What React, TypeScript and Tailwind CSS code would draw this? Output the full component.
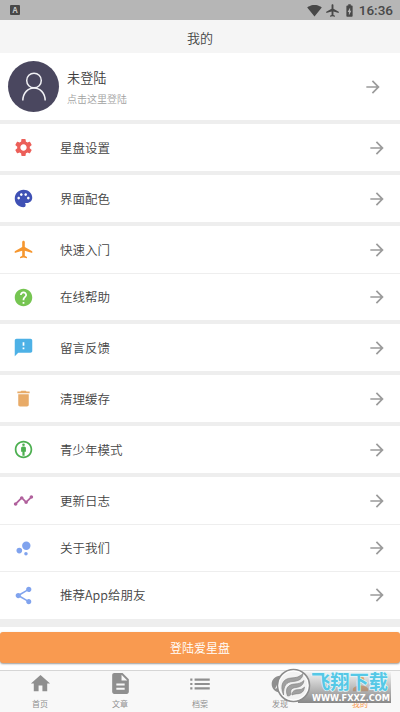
import React from 'react';
import type { IconType } from 'react-icons';
import {
    MdSettings,
    MdPalette,
    MdLocalAirport,
    MdHelp,
    MdFeedback,
    MdDelete,
    MdAttribution,
    MdTimeline,
    MdBubbleChart,
    MdShare,
    MdArrowForward,
    MdHome,
    MdDescription,
    MdList,
    MdExplore,
    MdPerson,
    MdSignalWifi4Bar,
    MdBatteryChargingFull,
} from 'react-icons/md';

interface MenuItem {
    label: string;
    icon: IconType;
    color: string;
}

const groups: MenuItem[][] = [
    [{ label: '星盘设置', icon: MdSettings, color: 'text-[#ec5f59]' }],
    [{ label: '界面配色', icon: MdPalette, color: 'text-[#3f51b5]' }],
    [
        { label: '快速入门', icon: MdLocalAirport, color: 'text-[#f6972f]' },
        { label: '在线帮助', icon: MdHelp, color: 'text-[#76c552]' },
    ],
    [{ label: '留言反馈', icon: MdFeedback, color: 'text-[#4db1e6]' }],
    [{ label: '清理缓存', icon: MdDelete, color: 'text-[#e8ab68]' }],
    [{ label: '青少年模式', icon: MdAttribution, color: 'text-[#4caf50]' }],
    [
        { label: '更新日志', icon: MdTimeline, color: 'text-[#b0609c]' },
        { label: '关于我们', icon: MdBubbleChart, color: 'text-[#80a3ee]' },
        { label: '推荐App给朋友', icon: MdShare, color: 'text-[#80a3ee]' },
    ],
];

const tabs = [
    { label: '首页', icon: MdHome, size: 'w-[23px]', active: false },
    { label: '文章', icon: MdDescription, size: 'w-[25px]', active: false },
    { label: '档案', icon: MdList, size: 'w-[26px]', active: false },
    { label: '发现', icon: MdExplore, size: 'w-[20px]', active: false },
    { label: '我的', icon: MdPerson, size: 'w-[23px]', active: true },
];

const StatusBar = () => (
    <div className="h-5 shrink-0 flex items-center justify-between bg-[#b6b6b6] pl-[10px] pr-[7px] text-[#484848]">
        <div className="w-[10px] h-[10px] rounded-[1px] bg-[#484848] text-[#c8c8c8] text-[8px] leading-[10px] font-bold text-center">A</div>
        <div className="flex items-center">
            <MdSignalWifi4Bar className="w-[15px] h-[15px]" />
            <MdLocalAirport className="w-[15px] h-[15px] ml-[3px]" />
            <MdBatteryChargingFull className="w-[15px] h-[15px] ml-[2px]" />
            <span className="font-[Roboto] text-[13.5px] leading-5 font-medium ml-[2px]">16:36</span>
        </div>
    </div>
);

const MenuRow = ({ item, divided }: { item: MenuItem; divided: boolean }) => {
    const Icon = item.icon;
    return (
        <div className={`h-[47px] flex items-center pl-[13px] pr-[13px] bg-white ${divided ? 'border-t border-[#eee]' : ''}`}>
            <Icon className={`w-[21px] h-[21px] ${item.color}`} />
            <span className="ml-[26px] flex-1 text-[12.5px] leading-5 font-[350] text-[#444]">{item.label}</span>
            <MdArrowForward className="w-5 h-5 text-[#9b9b9b]" />
        </div>
    );
};

const Watermark = () => (
    <div className="absolute left-[276px] top-[668px] w-[118px] h-[36px]">
        <div className="absolute left-[22px] top-[4px] w-[93px] h-[31px] bg-linear-to-b from-[#e4e4e4]/30 to-[#7c7c7c]/90" />
        <svg className="absolute left-0 top-0 w-[118px] h-[36px]" viewBox="0 0 118 36">
            <circle cx="17.5" cy="17.500" r="16" fill="#f2f2f2" stroke="#8c8c8c" strokeWidth="1.600" />
            <circle cx="17.5" cy="17.500" r="14.5" fill="none" stroke="#fff" strokeWidth="1" />
            <g fill="#a0a0a0" stroke="#7d7d7d" strokeWidth="0.6">
                <path d="M7.500 27C3.500 17 7 10.500 15 10c6-.4 8-1 12-4.500-.5 5.500-4 7.500-10 8-7 .6-9.500 4-9.500 13.500z" />
                <path d="M11.500 28c-3-8 1-11.500 7-12 4-.3 6.500-.8 9.500-3.500-.6 4.500-3.500 6.500-8 7-4.500.5-6 2.500-5 6 .2 1.500-1 2.500-3.500 2.500z" />
                <path d="M16 27c0-4 2.500-5.200 6-5.300 3 0 4.500-.6 6.500-2.700-.5 4.500-3 6.500-6.500 6.700-3 .1-4 .6-6 1.300z" />
            </g>
            <text
                x="35"
                y="21"
                textLength="77"
                lengthAdjust="spacingAndGlyphs"
                fontFamily="'Noto Sans CJK SC', sans-serif"
                fontSize="19"
                fontWeight="700"
                fill="#55c8e6"
                stroke="#e4f6fb"
                strokeWidth="1.4"
                paintOrder="stroke"
            >
                飞翔下载
            </text>
            <text
                x="36"
                y="32.500"
                textLength="78"
                lengthAdjust="spacingAndGlyphs"
                fontFamily="'DejaVu Sans', sans-serif"
                fontSize="8"
                fontWeight="700"
                fill="#fff"
            >
                WWW.FXXZ.COM
            </text>
        </svg>
    </div>
);

const App = () => {
    return (
        <div className="relative w-[400px] h-[712px] flex flex-col overflow-hidden bg-white font-['Noto_Sans_CJK_SC',sans-serif]">
            <StatusBar />
            <header className="h-[33px] shrink-0 flex items-center justify-center bg-[#f5f5f5] pt-[3px] text-[13px] font-[350] text-[#444]">我的</header>

            <div className="h-[67px] shrink-0 flex items-center pl-2 pr-[17px]">
                <div className="w-[51px] h-[51px] rounded-full bg-[#4a475f] flex items-center justify-center">
                    <svg className="w-[26px] h-[32px]" viewBox="0 0 26 32" fill="none" stroke="#f1f1f5" strokeWidth="1.5">
                        <circle cx="13" cy="9.500" r="7.300" />
                        <path d="M1.800 29.500C2 21.800 7 17 13 17S24 21.800 24.200 29.500" />
                    </svg>
                </div>
                <div className="ml-2 pt-[3px] flex-1">
                    <p className="text-[13.2px] leading-5 font-[350] text-[#3c3c3c]">未登陆</p>
                    <p className="mt-px text-[10px] leading-5 font-[350] text-[#a2a2a2]">点击这里登陆</p>
                </div>
                <MdArrowForward className="w-5 h-5 text-[#9b9b9b]" />
            </div>

            {groups.map((group, i) => (
                <div key={i} className="shrink-0 border-t-4 border-[#eee]">
                    {group.map((item, j) => (
                        <MenuRow key={item.label} item={item} divided={j > 0} />
                    ))}
                </div>
            ))}

            <div className="flex-1 mt-px border-t-8 border-[#eee] pt-[5px]">
                <button className="block w-full h-[31px] rounded-[3px] bg-[#f99a50] text-[12px] font-[350] text-white shadow-[0_1px_2px_rgba(0,0,0,0.4)]">
                    登陆爱星盘
                </button>
            </div>

            <nav className="h-[42px] shrink-0 grid grid-cols-5 border-t border-[#d6d6d6] bg-[#f8f8f8]">
                {tabs.map(({ label, icon: Icon, size, active }) => (
                    <div key={label} className={`flex flex-col items-center ${active ? 'text-[#f99a50]' : 'text-[#8f8f8f]'}`}>
                        <div className="h-[25px] flex items-center">
                            <Icon className={`${size} h-auto`} />
                        </div>
                        <span className="text-[8px] leading-[15px]">{label}</span>
                    </div>
                ))}
            </nav>

            <Watermark />
        </div>
    );
};

export default App;
